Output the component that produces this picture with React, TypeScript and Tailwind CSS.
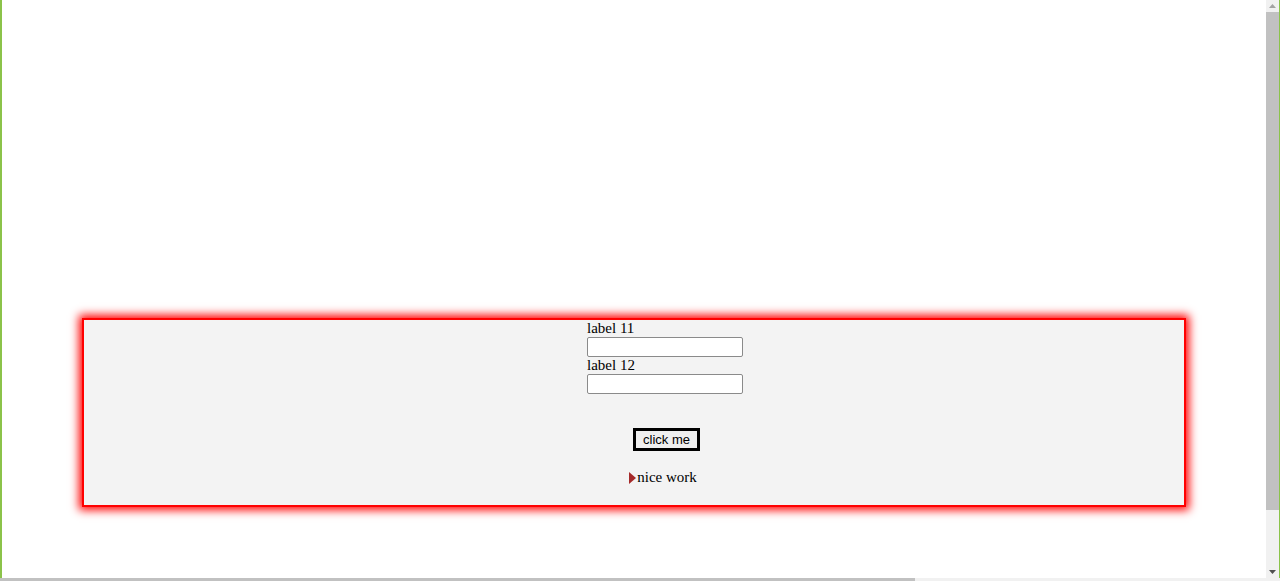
import React from 'react';

const App = () => {
  return (
    <div className="h-[581px] w-[1280px] flex flex-col overflow-hidden bg-white">
      <div className="flex flex-1 min-h-0 border-l-2 border-r border-[#8bc34a]">
        {/* Page content */}
        <div className="flex-1 pt-[318px] pl-[80px]">
          <div className="w-[1104px] h-[189px] border-2 border-[#ff0000] bg-[#f3f3f3] shadow-[0_0_9px_3px_#ff0000] flex flex-col items-center pl-[62px] font-['Liberation_Serif',serif] text-[15px] text-black">
            <div className="flex flex-col w-[156px]">
              <label className="leading-[17px]">label 11</label>
              <input className="h-[20px] w-[156px] bg-white border border-[#8a8a8a] rounded-[2px]" />
              <label className="leading-[17px]">label 12</label>
              <input className="h-[20px] w-[156px] bg-white border border-[#8a8a8a] rounded-[2px]" />
            </div>
            <button className="mt-[34px] ml-[3px] h-[23px] w-[67px] border-[3px] border-black bg-[#efefef] font-['Liberation_Sans',sans-serif] text-[13px] leading-none">
              click me
            </button>
            <div className="mt-[17px] -ml-[4px] flex items-center leading-[18px]">
              <svg width="7" height="12" viewBox="0 0 7 12" className="mt-[2px] mr-[1px]">
                <polygon points="0,0 7,6 0,12" fill="#a52a2a" />
              </svg>
              <span>nice work</span>
            </div>
          </div>
        </div>
        {/* Vertical scrollbar */}
        <div className="w-[13px] flex flex-col bg-[#f1f1f1]">
          <div className="h-[12px] flex items-center justify-center">
            <svg width="7" height="4" viewBox="0 0 7 4"><polygon points="0,4 3.5,0 7,4" fill="#a3a3a3" /></svg>
          </div>
          <div className="h-[498px] bg-[#c1c1c1]" />
          <div className="flex-1" />
          <div className="h-[12px] flex items-center justify-center">
            <svg width="7" height="4" viewBox="0 0 7 4"><polygon points="0,0 7,0 3.5,4" fill="#505050" /></svg>
          </div>
        </div>
      </div>
      {/* Horizontal scrollbar */}
      <div className="h-[3px] flex">
        <div className="w-[915px] bg-[#c1c1c1]" />
        <div className="flex-1 bg-[#f1f1f1]" />
      </div>
    </div>
  );
};

export default App;
